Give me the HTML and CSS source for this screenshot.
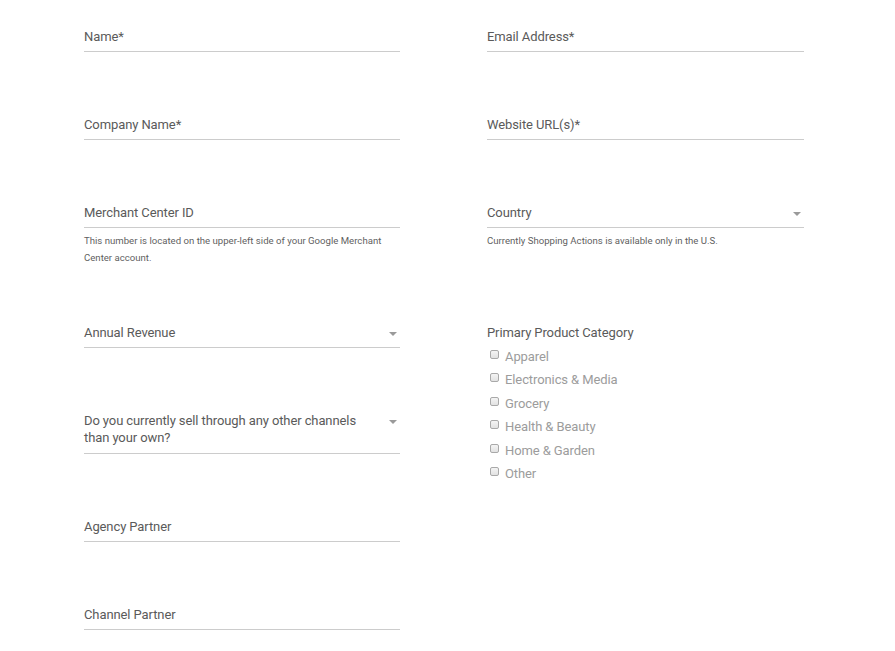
FILE: index.html
```html
<!DOCTYPE html>
<html lang="en">
<head>
<meta charset="utf-8">
<title>Form</title>
<link rel="stylesheet" href="styles.css">
</head>
<body>
<form class="form">
  <div class="group">
    <div class="field"><span class="label">Name*</span></div>
  </div>
  <div class="group">
    <div class="field"><span class="label">Email Address*</span></div>
  </div>

  <div class="group">
    <div class="field"><span class="label">Company Name*</span></div>
  </div>
  <div class="group">
    <div class="field"><span class="label">Website URL(s)*</span></div>
  </div>

  <div class="group with-help">
    <div class="field"><span class="label">Merchant Center ID</span></div>
    <p class="help">This number is located on the upper-left side of your Google Merchant Center account.</p>
  </div>
  <div class="group with-help">
    <div class="field select"><span class="label">Country</span><span class="arrow"></span></div>
    <p class="help">Currently Shopping Actions is available only in the U.S.</p>
  </div>

  <div class="group">
    <div class="field select"><span class="label">Annual Revenue</span><span class="arrow"></span></div>
  </div>
  <div class="group checks">
    <div class="label">Primary Product Category</div>
    <label class="option"><input type="checkbox"><span>Apparel</span></label>
    <label class="option"><input type="checkbox"><span>Electronics &amp; Media</span></label>
    <label class="option"><input type="checkbox"><span>Grocery</span></label>
    <label class="option"><input type="checkbox"><span>Health &amp; Beauty</span></label>
    <label class="option"><input type="checkbox"><span>Home &amp; Garden</span></label>
    <label class="option"><input type="checkbox"><span>Other</span></label>
  </div>

  <div class="group">
    <div class="field select tall"><span class="label wrap">Do you currently sell through any other channels than your own?</span><span class="arrow"></span></div>
  </div>

  <div class="group">
    <div class="field"><span class="label">Agency Partner</span></div>
  </div>

  <div class="group last">
    <div class="field"><span class="label">Channel Partner</span></div>
  </div>
</form>
</body>
</html>
```

FILE: styles.css
```css
html, body {
  margin: 0;
  padding: 0;
  background: #ffffff;
}

body {
  font-family: Roboto, "Liberation Sans", Arial, sans-serif;
  font-weight: 400;
  color: #5a5a5a;
}

.form {
  display: grid;
  grid-template-columns: 316px 317px;
  column-gap: 87px;
  padding: 28px 0 0 84px;
  margin: 0;
  align-items: start;
}

.group {
  grid-column: 1;
  margin-bottom: 64px;
}

.group.last {
  margin-bottom: 0;
}

.group:nth-child(2),
.group:nth-child(4),
.group:nth-child(6) {
  grid-column: 2;
}

.group.with-help {
  margin-bottom: 58px;
}

.field {
  display: flex;
  align-items: flex-start;
  border-bottom: 1px solid #cccccc;
  padding-bottom: 6px;
}

.field.tall {
  padding-bottom: 7px;
}

.label {
  display: block;
  font-size: 13px;
  line-height: 17px;
  color: #5a5a5a;
  letter-spacing: -0.1px;
}

.field .label {
  flex: 1;
}

.label.wrap {
  padding-right: 10px;
}

.arrow {
  width: 0;
  height: 0;
  border-left: 4px solid transparent;
  border-right: 4px solid transparent;
  border-top: 4px solid #9a9a9a;
  margin: 8px 3px 0 8px;
}

.help {
  margin: 4px 0 0;
  font-size: 9.6px;
  line-height: 17px;
  color: #5f5f5f;
}

.checks {
  grid-column: 2;
  grid-row: span 4;
  display: flex;
  flex-direction: column;
}

.checks .label {
  margin-bottom: 4px;
}

.option {
  display: flex;
  align-items: flex-start;
  height: 23.4px;
  font-size: 13px;
  line-height: 23.4px;
  color: #9c9c9c;
  letter-spacing: -0.1px;
}

.option input {
  appearance: none;
  -webkit-appearance: none;
  width: 9px;
  height: 9px;
  margin: 5px 6px 0 3px;
  border: 1px solid #a9a9a9;
  border-radius: 2px;
  background: linear-gradient(#f4f4f4, #e2e2e2);
  box-sizing: border-box;
  flex: none;
}
```
